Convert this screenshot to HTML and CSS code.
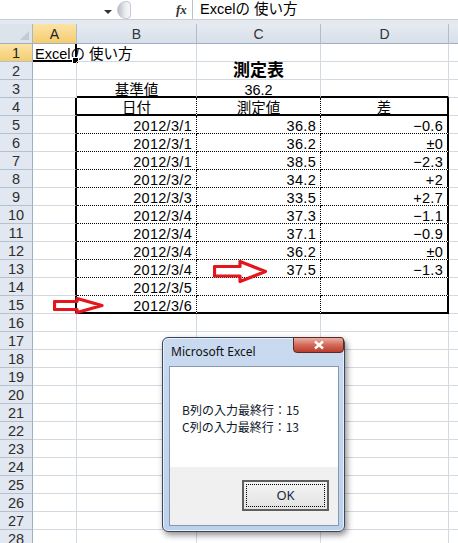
FILE: index.html
```html
<!DOCTYPE html>
<html lang="ja">
<head>
<meta charset="utf-8">
<title>Excel</title>
<link rel="stylesheet" href="styles.css">
</head>
<body>
<div class="app">
  <div class="fbar">
    <div class="namebox"><span class="drop"></span></div>
    <div class="fbtns"><span class="knob"></span><span class="fx">fx</span></div>
    <div class="formula">Excelの 使い方</div>
  </div>
  <div class="band"></div>
  <div class="sheet">
    <div class="corner"><span class="tri"></span></div><div class="ch sel">A</div><div class="ch">B</div><div class="ch">C</div><div class="ch">D</div><div class="ch e"></div>

    <div class="rh sel">1</div><div class="c cur">Excelの 使い方</div><div class="c"></div><div class="c"></div><div class="c"></div><div class="c e"></div>
    <div class="rh">2</div><div class="c"></div><div class="c"></div><div class="c m title">測定表</div><div class="c"></div><div class="c e"></div>
    <div class="rh">3</div><div class="c"></div><div class="c m bb">基準値</div><div class="c m bb">36.2</div><div class="c bb"></div><div class="c e"></div>
    <div class="rh">4</div><div class="c br"></div><div class="c m bb dr">日付</div><div class="c m bb dr">測定値</div><div class="c m bb br">差</div><div class="c e"></div>
    <div class="rh">5</div><div class="c br"></div><div class="c r db dr">2012/3/1</div><div class="c r db dr">36.8</div><div class="c r db br">−0.6</div><div class="c e"></div>
    <div class="rh">6</div><div class="c br"></div><div class="c r db dr">2012/3/1</div><div class="c r db dr">36.2</div><div class="c r db br">±0</div><div class="c e"></div>
    <div class="rh">7</div><div class="c br"></div><div class="c r db dr">2012/3/1</div><div class="c r db dr">38.5</div><div class="c r db br">−2.3</div><div class="c e"></div>
    <div class="rh">8</div><div class="c br"></div><div class="c r db dr">2012/3/2</div><div class="c r db dr">34.2</div><div class="c r db br">+2</div><div class="c e"></div>
    <div class="rh">9</div><div class="c br"></div><div class="c r db dr">2012/3/3</div><div class="c r db dr">33.5</div><div class="c r db br">+2.7</div><div class="c e"></div>
    <div class="rh">10</div><div class="c br"></div><div class="c r db dr">2012/3/4</div><div class="c r db dr">37.3</div><div class="c r db br">−1.1</div><div class="c e"></div>
    <div class="rh">11</div><div class="c br"></div><div class="c r db dr">2012/3/4</div><div class="c r db dr">37.1</div><div class="c r db br">−0.9</div><div class="c e"></div>
    <div class="rh">12</div><div class="c br"></div><div class="c r db dr">2012/3/4</div><div class="c r db dr">36.2</div><div class="c r db br">±0</div><div class="c e"></div>
    <div class="rh">13</div><div class="c br"></div><div class="c r db dr">2012/3/4</div><div class="c r db dr">37.5</div><div class="c r db br">−1.3</div><div class="c e"></div>
    <div class="rh">14</div><div class="c br"></div><div class="c r db dr">2012/3/5</div><div class="c r db dr"></div><div class="c r db br"></div><div class="c e"></div>
    <div class="rh">15</div><div class="c br"></div><div class="c r bb dr">2012/3/6</div><div class="c r bb dr"></div><div class="c r bb br"></div><div class="c e"></div>
    <div class="rh">16</div><div class="c"></div><div class="c"></div><div class="c"></div><div class="c"></div><div class="c e"></div>
    <div class="rh">17</div><div class="c"></div><div class="c"></div><div class="c"></div><div class="c"></div><div class="c e"></div>
    <div class="rh">18</div><div class="c"></div><div class="c"></div><div class="c"></div><div class="c"></div><div class="c e"></div>
    <div class="rh">19</div><div class="c"></div><div class="c"></div><div class="c"></div><div class="c"></div><div class="c e"></div>
    <div class="rh">20</div><div class="c"></div><div class="c"></div><div class="c"></div><div class="c"></div><div class="c e"></div>
    <div class="rh">21</div><div class="c"></div><div class="c"></div><div class="c"></div><div class="c"></div><div class="c e"></div>
    <div class="rh">22</div><div class="c"></div><div class="c"></div><div class="c"></div><div class="c"></div><div class="c e"></div>
    <div class="rh">23</div><div class="c"></div><div class="c"></div><div class="c"></div><div class="c"></div><div class="c e"></div>
    <div class="rh">24</div><div class="c"></div><div class="c"></div><div class="c"></div><div class="c"></div><div class="c e"></div>
    <div class="rh">25</div><div class="c"></div><div class="c"></div><div class="c"></div><div class="c"></div><div class="c e"></div>
    <div class="rh">26</div><div class="c"></div><div class="c"></div><div class="c"></div><div class="c"></div><div class="c e"></div>
    <div class="rh">27</div><div class="c"></div><div class="c"></div><div class="c"></div><div class="c"></div><div class="c e"></div>
    <div class="rh">28</div><div class="c"></div><div class="c"></div><div class="c"></div><div class="c"></div><div class="c e"></div>
  </div>

  <svg class="arrow arrow1" width="55" height="23" viewBox="0 0 55 23">
    <polygon points="1.5,6.5 27,6.5 27,1.5 52.5,11.5 27,21.5 27,16 1.5,16"/>
  </svg>
  <svg class="arrow arrow2" width="51" height="17" viewBox="0 0 51 17">
    <polygon points="1.5,4.5 24,4.5 24,1.5 49,8.5 24,15.5 24,12.5 1.5,12.5"/>
  </svg>

  <div class="dlg">
    <div class="dlg-title">Microsoft Excel</div>
    <div class="dlg-close">
      <svg width="12" height="10" viewBox="0 0 12 10"><path d="M2 1.5 L10 8.5 M10 1.5 L2 8.5"/></svg>
    </div>
    <div class="dlg-body">
      <div class="dlg-msg">
        <p>B列の入力最終行：15</p>
        <p>C列の入力最終行：13</p>
      </div>
      <div class="dlg-foot"><button class="ok"><span>OK</span></button></div>
    </div>
  </div>
</div>
</body>
</html>
```

FILE: styles.css
```css
* { box-sizing: border-box; }
html, body { margin: 0; padding: 0; }
body {
  width: 458px;
  height: 543px;
  overflow: hidden;
  background: #fff;
  font-family: "Liberation Sans", "Noto Sans CJK JP", sans-serif;
  color: #000;
}
.app {
  position: relative;
  width: 458px;
  height: 543px;
  overflow: hidden;
}

/* formula bar */
.fbar {
  display: flex;
  height: 20px;
  background: #fff;
  border-bottom: 1px solid #c6ced9;
}
.namebox {
  width: 115px;
  position: relative;
}
.drop {
  position: absolute;
  left: 104px;
  top: 10px;
  width: 0;
  height: 0;
  border-left: 4px solid transparent;
  border-right: 4px solid transparent;
  border-top: 4px solid #333;
}
.fbtns {
  width: 77px;
  display: flex;
  align-items: center;
  position: relative;
}
.knob {
  width: 14px;
  height: 18px;
  margin-left: 2px;
  border-radius: 9px 4px 4px 9px;
  background: linear-gradient(90deg, #b9bec6, #e9ecf0 60%, #f7f8fa);
  border: 1px solid #c3c9d2;
}
.fx {
  margin-left: 45px;
  font-family: "Liberation Serif", serif;
  font-style: italic;
  font-weight: bold;
  font-size: 13px;
  color: #333;
}
.formula {
  flex: 1;
  border-left: 1px solid #b8c3d1;
  padding-left: 7px;
  font-size: 14.5px;
  line-height: 19px;
  white-space: nowrap;
}
.band {
  height: 4px;
  background: #e4e9f0;
}

/* sheet */
.sheet {
  display: grid;
  grid-template-columns: 33px 44px 120px 124px 128px 9px;
  grid-template-rows: 20px;
  grid-auto-rows: 18px;
}
.corner {
  position: relative;
  background: #dde3eb;
  border-right: 1px solid #a9b6c6;
  border-bottom: 1px solid #9eb0c5;
}
.tri {
  position: absolute;
  right: 3px;
  bottom: 3px;
  width: 0;
  height: 0;
  border-left: 9px solid transparent;
  border-bottom: 9px solid #c3cad3;
}
.ch {
  background: linear-gradient(#e6ebf2, #d8dfe9);
  border-right: 1px solid #b2bdca;
  border-bottom: 1px solid #9eb0c5;
  text-align: center;
  font-size: 14px;
  line-height: 20px;
  color: #333;
}
.ch.e { border-right: none; }
.rh {
  background: #e2e8f1;
  border-right: 1px solid #9eb0c5;
  border-bottom: 1px solid #b5c0cd;
  text-align: center;
  font-size: 14.5px;
  line-height: 18px;
  color: #2e2e2e;
}
.sel {
  background: linear-gradient(#fbe3a7, #f6cd6e);
  color: #222;
}
.c {
  border-right: 1px solid #d3d9e2;
  border-bottom: 1px solid #d3d9e2;
  font-size: 14.5px;
  line-height: 16px;
  padding: 2px 3px 0;
  white-space: nowrap;
  position: relative;
}
.c.e { border-right: none; }
.c.r { text-align: right; padding-right: 4px; letter-spacing: 0.3px; }
.c.m { text-align: center; }
.title { font-weight: bold; font-size: 17px; padding-top: 1px; }
.cur {
  padding-left: 2px;
  border-bottom: 2px solid #000;
  border-right: 2px solid #000;
}
.cur::after {
  content: "";
  position: absolute;
  right: -4px;
  bottom: -4px;
  width: 5px;
  height: 5px;
  background: #000;
  border: 1px solid #fff;
}
.bb { border-bottom: 2px solid #000; }
.db { border-bottom: 1px dotted #000; }
.br { border-right: 2px solid #000; }
.dr { border-right: 1px dotted #000; }

/* arrows */
.arrow {
  position: absolute;
}
.arrow polygon {
  fill: none;
  stroke: #e3161d;
  stroke-width: 3.2;
  stroke-linejoin: round;
}
.arrow1 { left: 213px; top: 260px; }
.arrow2 { left: 53px; top: 297px; }

/* dialog */
.dlg {
  position: absolute;
  left: 162px;
  top: 337px;
  width: 183px;
  height: 195px;
  border: 1px solid #3b4656;
  border-radius: 6px;
  background: linear-gradient(#c9daf0, #bcd1ec);
  box-shadow: 2px 3px 6px rgba(0, 0, 0, 0.45), inset 0 0 0 1px #e8f0fb;
  padding: 28px 5px 5px 6px;
  display: flex;
  flex-direction: column;
}
.dlg-title {
  position: absolute;
  left: 8px;
  top: 6px;
  font-family: "Noto Sans", "Liberation Sans", sans-serif;
  font-size: 12px;
  line-height: 16px;
  color: #111;
}
.dlg-close {
  position: absolute;
  right: 0;
  top: -1px;
  width: 51px;
  height: 16px;
  border: 1px solid #5a2a25;
  border-radius: 0 3px 4px 4px;
  background: linear-gradient(#eab1a4, #d2695a 50%, #bb3d2a);
  display: flex;
  align-items: center;
  justify-content: center;
}
.dlg-close path {
  stroke: #fff;
  stroke-width: 2.4;
  fill: none;
}
.dlg-body {
  flex: 1;
  border: 1px solid #8598b0;
  background: #fff;
  display: flex;
  flex-direction: column;
}
.dlg-msg {
  height: 100px;
  padding: 34px 0 0 12px;
  font-family: "Noto Sans CJK JP", sans-serif;
  font-size: 12px;
  line-height: 17px;
  color: #101828;
}
.dlg-msg p { margin: 0; }
.dlg-foot {
  flex: 1;
  background: #f0f0f0;
  display: flex;
  justify-content: flex-end;
  align-items: flex-start;
  padding: 13px 9px 0 0;
}
.ok {
  width: 87px;
  height: 31px;
  border: 2px solid #5f5f5f;
  background: linear-gradient(#f4f4f4, #e2e2e2);
  padding: 2px;
  margin: 0;
  font-family: "Noto Sans", "Liberation Sans", sans-serif;
  font-size: 13px;
  color: #1a2740;
}
.ok span {
  display: block;
  height: 100%;
  border: 1px dotted #000;
  line-height: 21px;
}
```
